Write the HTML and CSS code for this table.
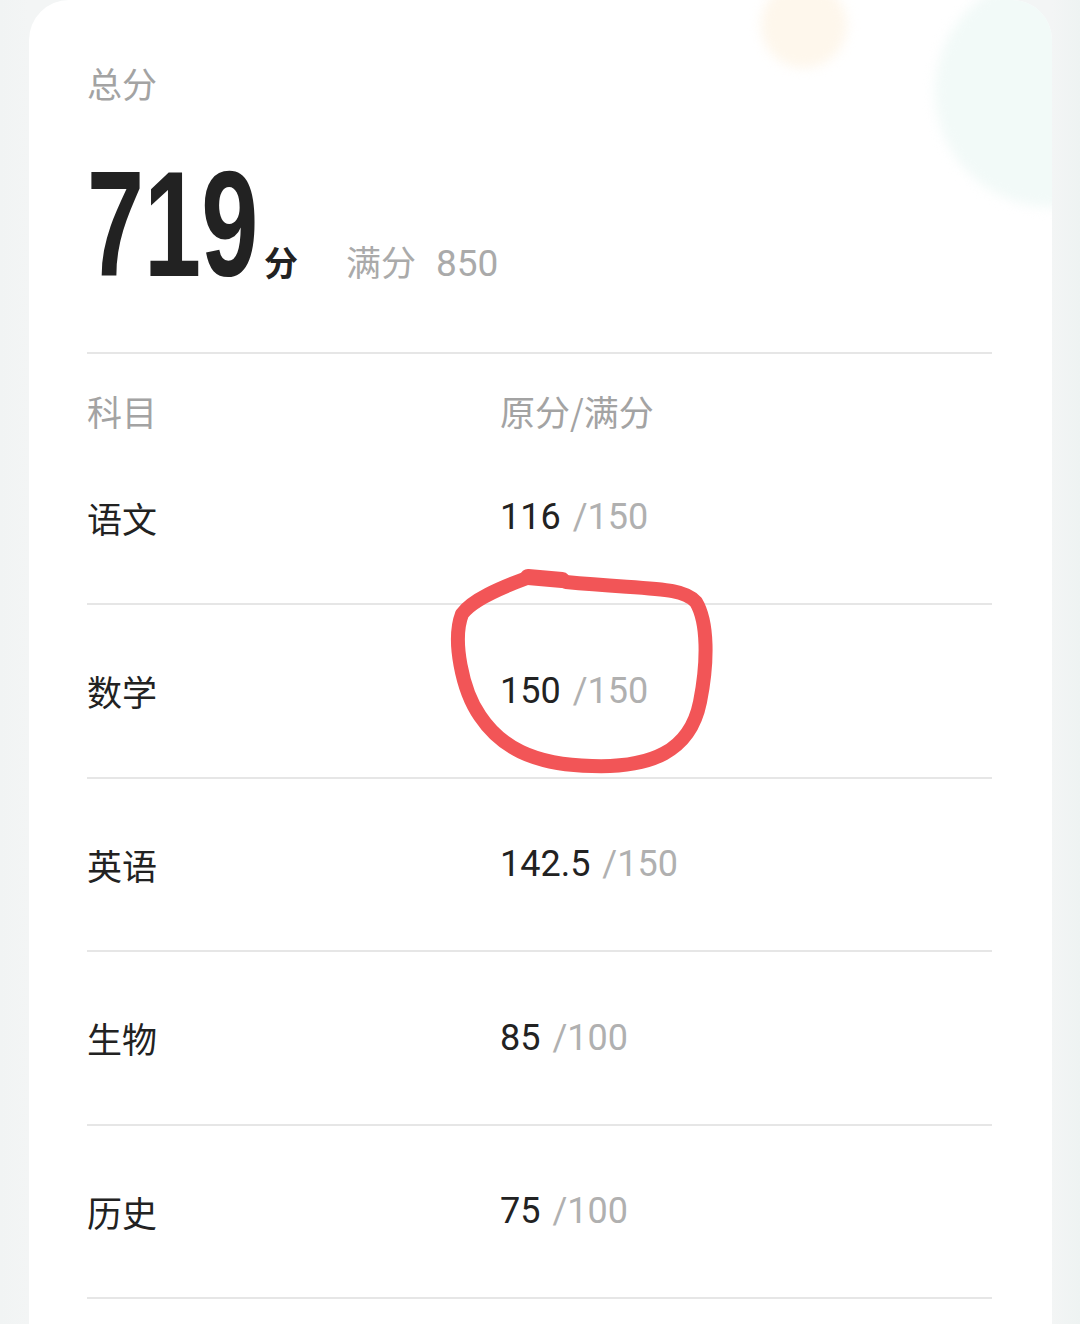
FILE: index.html
```html
<!DOCTYPE html>
<html lang="zh-CN">
<head>
<meta charset="utf-8">
<title>成绩</title>
<link rel="stylesheet" href="styles.css">
</head>
<body>
<div class="card">
  <div class="blob blob-orange"></div>
  <div class="blob blob-teal"></div>
  <div class="content">
    <div class="label">总分</div>
    <div class="total">
      <span class="big">719</span><span class="unit">分</span><span class="full">满分<span class="num">850</span></span>
    </div>
    <div class="table">
      <div class="head"><span>科目</span><span>原分/满分</span></div>
      <div class="row first"><span class="subj">语文</span><span class="val">116 <em>/150</em></span></div>
      <div class="row"><span class="subj">数学</span><span class="val">150 <em>/150</em></span></div>
      <div class="row"><span class="subj">英语</span><span class="val">142.5 <em>/150</em></span></div>
      <div class="row"><span class="subj">生物</span><span class="val">85 <em>/100</em></span></div>
      <div class="row"><span class="subj">历史</span><span class="val">75 <em>/100</em></span></div>
      <div class="row last"></div>
    </div>
  </div>
</div>
<svg class="mark" width="1080" height="1324" viewBox="0 0 1080 1324">
  <path d="M527 578 C500 588 472 600 462 614 C452 640 462 690 480 716 C500 746 532 765 592 766 C650 768 690 752 700 702 C708 662 708 622 696 602 C682 586 650 590 566 582" fill="none" stroke="#f25557" stroke-width="14" stroke-linecap="round" stroke-linejoin="round"/>
  <path d="M528 577 L562 580" fill="none" stroke="#f25557" stroke-width="16" stroke-linecap="round"/>
</svg>
</body>
</html>
```

FILE: styles.css
```css
* { box-sizing: border-box; }
html, body { margin: 0; padding: 0; }
body {
  width: 1080px;
  height: 1324px;
  overflow: hidden;
  position: relative;
  background: linear-gradient(90deg, #f1f4f4 0, #f3f5f5 29px, #f3f5f5 1052px, #eef3f2 1080px);
  font-family: "Noto Sans CJK SC", "Noto Sans", sans-serif;
}
.card {
  position: relative;
  margin: 0 28px 0 29px;
  height: 1400px;
  background: #fff;
  border-radius: 40px 40px 0 0;
  overflow: hidden;
}
.blob {
  position: absolute;
  border-radius: 50%;
  filter: blur(6px);
}
.blob-orange {
  left: 732px; top: -18px;
  width: 86px; height: 86px;
  background: #fef7ec;
}
.blob-teal {
  left: 906px; top: -25px;
  width: 232px; height: 232px;
  background: #f2faf8;
}
.content {
  position: relative;
  padding: 58px 60px 0 58px;
}
.label {
  font-size: 35px;
  line-height: 50px;
  color: #a3a3a3;
}
.total {
  display: flex;
  align-items: baseline;
  margin-top: 40px;
  height: 151px;
}
.big {
  display: inline-block;
  font-family: "Liberation Sans", Arial, sans-serif;
  font-weight: 700;
  font-size: 151px;
  line-height: 1;
  color: #222;
  transform: scaleX(0.68);
  transform-origin: left bottom;
  margin-right: -81px;
}
.unit {
  font-size: 34px;
  font-weight: 700;
  color: #222;
  margin-left: 6px;
}
.full {
  font-size: 35px;
  color: #aaa;
  margin-left: 48px;
}
.full .num {
  font-family: "Roboto", "Liberation Sans", sans-serif;
  font-size: 37px;
  margin-left: 20px;
}
.table {
  margin-top: 53px;
}
.head {
  display: grid;
  grid-template-columns: 413px 1fr;
  border-top: 2px solid #e6e6e6;
  padding-top: 32px;
  line-height: 50px;
  font-size: 35px;
  color: #a3a3a3;
}
.row {
  display: grid;
  grid-template-columns: 413px 1fr;
  align-items: center;
  height: 173.5px;
  border-top: 2px solid #e6e6e6;
}
.row.first {
  border-top: none;
  height: 167px;
  padding-bottom: 5px;
}
.subj {
  font-size: 35px;
  color: #222;
}
.val {
  font-family: "Roboto", "Liberation Sans", sans-serif;
  font-size: 36px;
  color: #222;
}
.val em {
  font-style: normal;
  color: #b0b0b0;
  margin-left: 3px;
}
.mark {
  position: absolute;
  left: 0; top: 0;
  pointer-events: none;
}
```
